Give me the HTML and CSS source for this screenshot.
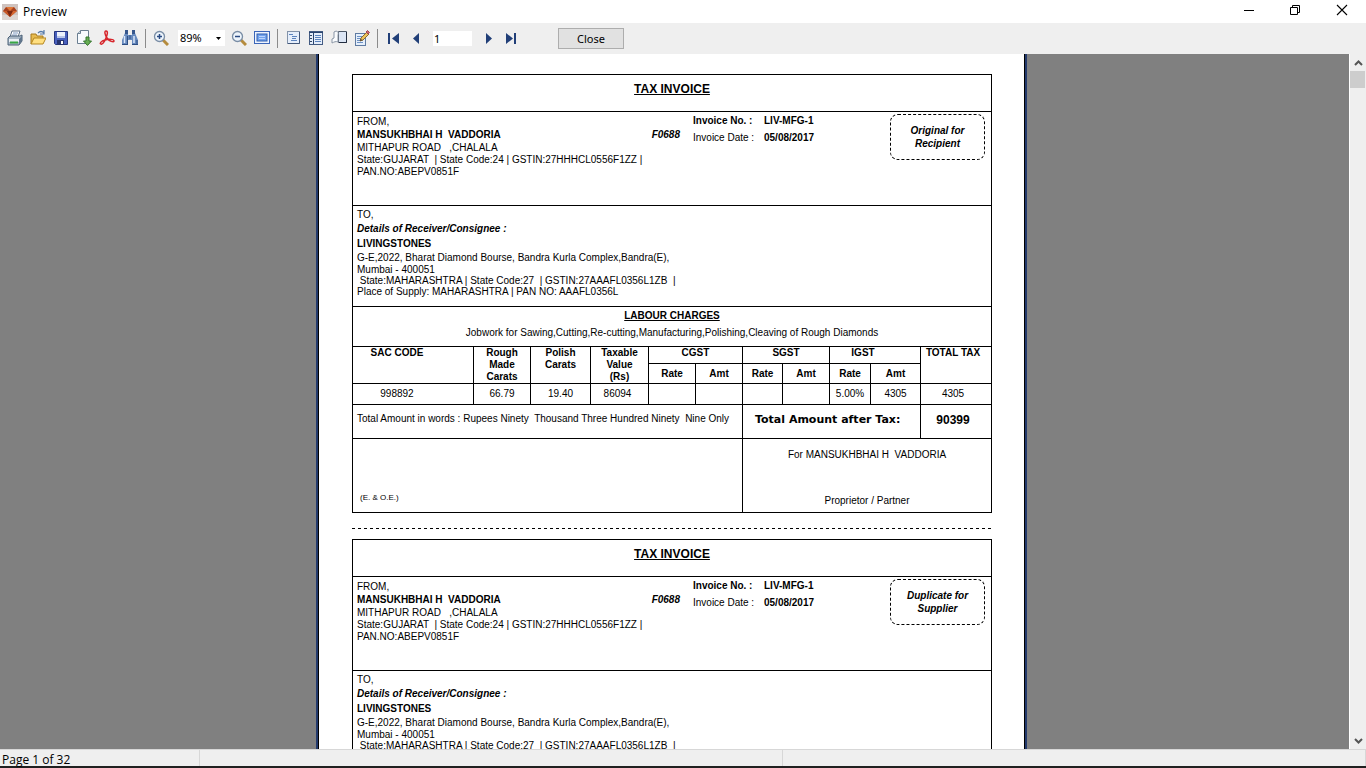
FILE: index.html
```html
<!DOCTYPE html>
<html lang="en">
<head>
<meta charset="utf-8">
<title>Preview</title>
<link rel="stylesheet" href="styles.css">
</head>
<body>
<div class="window">
  <header class="titlebar">
    <svg class="app-icon" viewBox="0 0 16 16" width="16" height="16"><rect width="16" height="16" fill="#cfc3bf"/><rect y="11" width="16" height="5" fill="#ddd5d1"/><path d="M4 3h8l3 4-7 6-7-6z" fill="#a8401c"/><path d="M4 3l4 4 4-4z" fill="#e07a3c"/><path d="M1 7h4l3 6z" fill="#c95a28"/><path d="M5 7h6l-3 6z" fill="#7c2710"/><path d="M11 7h4l-7 6z" fill="#d8672f"/></svg>
    <h1 class="title">Preview</h1>
    <div class="window-controls">
      <button aria-label="Minimize"><svg viewBox="0 0 12 12" width="12" height="12"><path d="M1 6.500h10" stroke="#000"/></svg></button>
      <button aria-label="Restore"><svg viewBox="0 0 12 12" width="12" height="12" fill="none" stroke="#000"><path d="M1.500 3.500h7v7h-7zM3.500 3.500v-2h7v7h-2"/></svg></button>
      <button aria-label="Close window"><svg viewBox="0 0 12 12" width="12" height="12"><path d="M1 1l10 10M11 1L1 11" stroke="#000" stroke-width="1.100"/></svg></button>
    </div>
  </header>

  <nav class="toolbar" aria-label="Preview tools">
    <div class="group">
      <button aria-label="Print"><svg viewBox="0 0 16 16" width="16" height="16"><path d="M5 1h8l-2 6H3z" fill="#fff" stroke="#5d7186"/><path d="M6 3h5M5 5h5" stroke="#7e9ac0"/><path d="M1 8l2-2h10l2-1v6l-3 4H1z" fill="#a9b8c6" stroke="#4b6076"/><path d="M2 9h10v3H2z" fill="#e9eff4"/><path d="M3 12.500h8" stroke="#37a644" stroke-width="2"/><path d="M12 9l3-3v5l-3 4z" fill="#60768d"/></svg></button>
      <button aria-label="Open"><svg viewBox="0 0 16 16" width="16" height="16"><path d="M1 14V4h5l1 2h6v3" fill="#e7bb50" stroke="#a87a1d"/><path d="M1 14L4 8h12l-3 6z" fill="#ffdf80" stroke="#b5861f"/><path d="M8 3c2-2 4-2 6 0M14 0v4h-4" fill="none" stroke="#5579a8" stroke-width="1.200"/></svg></button>
      <button aria-label="Save"><svg viewBox="0 0 16 16" width="16" height="16"><path d="M1.500 1.500h13v13h-12l-1-1z" fill="#4960bd" stroke="#26357f"/><path d="M4 2h8v6H4z" fill="#edf1fb"/><path d="M4 6h8v2H4z" fill="#b9c6e9"/><path d="M4 10h7v5H4z" fill="#28356f"/><path d="M8 11h2v3H8z" fill="#fff"/></svg></button>
      <button aria-label="Export"><svg viewBox="0 0 16 16" width="16" height="16"><path d="M4.500 .5h8v13h-11v-10z" fill="#f8fbfe" stroke="#6b7f91"/><path d="M4.500 .5v3h-3" fill="#cbd8e3" stroke="#6b7f91"/><path d="M10 7h3v4h2.500l-4 4.500-4-4.500H10z" fill="#67ad55" stroke="#35762c"/></svg></button>
      <button aria-label="Export to PDF"><svg viewBox="0 0 16 16" width="16" height="16" fill="none" stroke="#d7262c" stroke-width="1.500"><path d="M7 1c-2 0-1 4 1 7 2 3 7 5 7 3s-5-2-9-1c-4 1-6 4-4 4 2 1 5-5 6-9 1-3 0-4-1-4z"/></svg></button>
      <button aria-label="Find"><svg viewBox="0 0 16 16" width="16" height="16"><path d="M3 3h3v2h4V3h3l3 7v5h-6v-5H6v5H0v-5z" fill="#6689bd"/><path d="M3 0h3v4H3zM10 0h3v4h-3z" fill="#36568c"/><path d="M2.500 6v7M12 6v7" stroke="#dbe8fa" stroke-width="1.500"/><path d="M8 5v4M5.500 6v8M15 10v5M0 14.500h6M10 14.500h6" stroke="#2e4e83"/></svg></button>
    </div>
    <span class="separator"></span>
    <div class="group zoom-group">
      <button aria-label="Zoom in"><svg viewBox="0 0 16 16" width="16" height="16"><path d="M10 10l5 5" stroke="#b58b3d" stroke-width="3"/><circle cx="6.500" cy="6.500" r="5" fill="#edf4fb" stroke="#798da5" stroke-width="1.300"/><path d="M4 6.500h5M6.500 4v5" stroke="#294a83" stroke-width="1.500"/></svg></button>
      <span class="combo">
        <select aria-label="Zoom level"><option>89%</option><option>100%</option></select>
        <svg class="combo-arrow" viewBox="0 0 5 3" width="5" height="3"><path d="M0 0h5L2.500 3z" fill="#000"/></svg>
      </span>
      <button aria-label="Zoom out"><svg viewBox="0 0 16 16" width="16" height="16"><path d="M10 10l5 5" stroke="#b58b3d" stroke-width="3"/><circle cx="6.500" cy="6.500" r="5" fill="#edf4fb" stroke="#798da5" stroke-width="1.300"/><path d="M4 6.500h5" stroke="#294a83" stroke-width="1.500"/></svg></button>
      <button aria-label="Full screen"><svg viewBox="0 0 16 16" width="16" height="16"><rect x=".5" y="1.500" width="15" height="12" fill="#eef4ff" stroke="#3c66b8"/><rect x="3" y="4" width="10" height="7" fill="#73a3ed" stroke="#315eae"/><path d="M5 6.500h6M5 8.500h6" stroke="#bcd5fc"/></svg></button>
    </div>
    <span class="separator"></span>
    <div class="group">
      <button aria-label="Outline"><svg viewBox="0 0 16 16" width="16" height="16"><rect x="2.500" y="1.500" width="12" height="12" fill="#e5eefb" stroke="#8292a9"/><path d="M14.500 2v11.500H3" fill="none" stroke="#42577a"/><path d="M4 4.500h4M7 6.500h5M7 8.500h4M6 10.500h6" stroke="#5c84be"/></svg></button>
      <button aria-label="Thumbnails"><svg viewBox="0 0 16 16" width="16" height="16"><rect x="1.500" y="1.500" width="13" height="13" fill="#e5eefb" stroke="#435b82"/><path d="M1 2.500h14M5.500 2v12" stroke="#29446f"/><path d="M7 5.500h6M7 7.500h6M7 9.500h6M7 11.500h6" stroke="#5c84be"/><path d="M2 5.500h2M2 8.500h2M2 11.500h2" stroke="#304664"/></svg></button>
      <button aria-label="Page settings"><svg viewBox="0 0 16 16" width="16" height="16"><path d="M7.500 1.500h8v11h-8z" fill="#dbe5f4" stroke="#4d5969"/><path d="M15.500 2v10.500H8" fill="none" stroke="#222d40"/><path d="M3 2c3-2 5 0 4 3v7c-2-1-4 0-6 1V9l2-1z" fill="#f9fbfd" stroke="#8995a5"/></svg></button>
      <button aria-label="Edit page"><svg viewBox="0 0 16 16" width="16" height="16"><rect x="1.500" y="3.500" width="10" height="12" fill="#e5effb" stroke="#5f7ba2"/><path d="M3 6.500h6M3 8.500h5M3 10.500h6M3 12.500h6" stroke="#6d91c5"/><path d="M6 11l1-3 6-6 2 2-6 6z" fill="#edc45b" stroke="#8c692f"/><path d="M12 2l1.500-1.500 2 2L14 4z" fill="#d2686f" stroke="#a14850"/><path d="M6 11l1-2 1 1z" fill="#333"/></svg></button>
    </div>
    <span class="separator"></span>
    <div class="group pager">
      <button aria-label="First page"><svg viewBox="0 0 16 16" width="16" height="16" fill="#213f78"><path d="M3 3h2v11H3zM14 3v11L7 8.500z"/></svg></button>
      <button aria-label="Previous page"><svg viewBox="0 0 16 16" width="16" height="16" fill="#213f78"><path d="M11 3v11L5 8.500z"/></svg></button>
      <input class="page-input" aria-label="Page number" value="1">
      <button aria-label="Next page"><svg viewBox="0 0 16 16" width="16" height="16" fill="#213f78"><path d="M5 3v11l6-5.500z"/></svg></button>
      <button aria-label="Last page"><svg viewBox="0 0 16 16" width="16" height="16" fill="#213f78"><path d="M2 3v11l7-5.500zM10 3h2v11h-2z"/></svg></button>
    </div>
    <button class="close-button">Close</button>
  </nav>

  <div class="viewport">
    <main class="canvas">
      <div class="sheet">
        <article class="invoice">
          <h2 class="invoice-title">TAX INVOICE</h2>
          <section class="from">
            <div class="sender">
              <p>FROM,</p>
              <p class="name-line"><b>MANSUKHBHAI H  VADDORIA</b><b class="code">F0688</b></p>
              <p>MITHAPUR ROAD   ,CHALALA</p>
              <p class="tight">State:GUJARAT  | State Code:24 | GSTIN:27HHHCL0556F1ZZ |</p>
              <p class="tight">PAN.NO:ABEPV0851F</p>
            </div>
            <dl class="meta">
              <dt><b>Invoice No. :</b></dt><dd>LIV-MFG-1</dd>
              <dt>Invoice Date :</dt><dd>05/08/2017</dd>
            </dl>
            <p class="stamp">Original for<br>Recipient</p>
          </section>
          <section class="to">
            <p>TO,</p>
            <p class="details">Details of Receiver/Consignee :</p>
            <p class="receiver">LIVINGSTONES</p>
            <p class="tight">G-E,2022, Bharat Diamond Bourse, Bandra Kurla Complex,Bandra(E),</p>
            <p class="tight">Mumbai - 400051</p>
            <p class="tight"> State:MAHARASHTRA | State Code:27  | GSTIN:27AAAFL0356L1ZB  |</p>
            <p class="tight">Place of Supply: MAHARASHTRA | PAN NO: AAAFL0356L</p>
          </section>
          <section class="labour">
            <h3>LABOUR CHARGES</h3>
            <p>Jobwork for Sawing,Cutting,Re-cutting,Manufacturing,Polishing,Cleaving of Rough Diamonds</p>
          </section>
          <table class="charges">
            <colgroup><col class="c-sac"><col class="c-rough"><col class="c-polish"><col class="c-value"><col class="c-wide"><col class="c-wide"><col class="c-narrow"><col class="c-wide"><col class="c-rate"><col class="c-amt"><col class="c-total"></colgroup>
            <thead>
              <tr><th class="sac" rowspan="2">SAC CODE</th><th rowspan="2">Rough<br>Made<br>Carats</th><th rowspan="2">Polish<br>Carats</th><th rowspan="2">Taxable<br>Value<br>(Rs)</th><th colspan="2">CGST</th><th colspan="2">SGST</th><th class="igst" colspan="2">IGST</th><th class="tax" rowspan="2">TOTAL TAX</th></tr>
              <tr class="sub"><th>Rate</th><th>Amt</th><th>Rate</th><th>Amt</th><th>Rate</th><th>Amt</th></tr>
            </thead>
            <tbody>
              <tr><td class="sac">998892</td><td>66.79</td><td>19.40</td><td class="value">86094</td><td></td><td></td><td></td><td></td><td>5.00%</td><td>4305</td><td class="tax">4305</td></tr>
            </tbody>
          </table>
          <section class="totals">
            <p class="words">Total Amount in words : Rupees Ninety  Thousand Three Hundred Ninety  Nine Only</p>
            <p class="total-label">Total Amount after Tax:</p>
            <p class="grand-total">90399</p>
          </section>
          <section class="signature">
            <p class="eoe">(E. &amp; O.E.)</p>
            <div class="signatory"><p>For MANSUKHBHAI H  VADDORIA</p><p>Proprietor / Partner</p></div>
          </section>
        </article>

        <div class="cut-line"></div>

        <article class="invoice">
          <h2 class="invoice-title">TAX INVOICE</h2>
          <section class="from">
            <div class="sender">
              <p>FROM,</p>
              <p class="name-line"><b>MANSUKHBHAI H  VADDORIA</b><b class="code">F0688</b></p>
              <p>MITHAPUR ROAD   ,CHALALA</p>
              <p class="tight">State:GUJARAT  | State Code:24 | GSTIN:27HHHCL0556F1ZZ |</p>
              <p class="tight">PAN.NO:ABEPV0851F</p>
            </div>
            <dl class="meta">
              <dt><b>Invoice No. :</b></dt><dd>LIV-MFG-1</dd>
              <dt>Invoice Date :</dt><dd>05/08/2017</dd>
            </dl>
            <p class="stamp">Duplicate for<br>Supplier</p>
          </section>
          <section class="to">
            <p>TO,</p>
            <p class="details">Details of Receiver/Consignee :</p>
            <p class="receiver">LIVINGSTONES</p>
            <p class="tight">G-E,2022, Bharat Diamond Bourse, Bandra Kurla Complex,Bandra(E),</p>
            <p class="tight">Mumbai - 400051</p>
            <p class="tight"> State:MAHARASHTRA | State Code:27  | GSTIN:27AAAFL0356L1ZB  |</p>
          </section>
        </article>
      </div>
    </main>
    <div class="scrollbar">
      <button aria-label="Scroll up"><svg viewBox="0 0 9 6" width="9" height="6"><path d="M1 5l3.500-3.500L8 5" fill="none" stroke="#555" stroke-width="2"/></svg></button>
      <div class="thumb"></div>
      <button class="scroll-down" aria-label="Scroll down"><svg viewBox="0 0 9 6" width="9" height="6"><path d="M1 1l3.500 3.500L8 1" fill="none" stroke="#555" stroke-width="2"/></svg></button>
    </div>
  </div>

  <footer class="statusbar">
    <span class="page-status">Page 1 of 32</span>
    <span class="status-middle"></span>
    <span class="status-end"></span>
  </footer>
</div>
</body>
</html>
```
FILE: styles.css
```css
* { box-sizing: border-box; }

body {
  margin: 0;
  font-family: "Liberation Sans", Arial, sans-serif;
  color: #000;
}

h1, h2, h3, p, dl, dd { margin: 0; }

button {
  padding: 0;
  border: 0;
  background: none;
}

svg { display: block; }

.window {
  display: flex;
  flex-direction: column;
  height: 100vh;
  background: #efefef;
  border-bottom: 2px solid #202020;
}

/* Title bar */
.titlebar {
  display: flex;
  align-items: center;
  flex: none;
  height: 23px;
  padding-left: 2px;
  background: #fff;
}

.title {
  margin-left: 5px;
  font: 400 12px/20px "Open Sans", sans-serif;
}

.window-controls {
  display: flex;
  margin-left: auto;
}

.window-controls button {
  display: flex;
  justify-content: center;
  width: 46px;
  padding-bottom: 3px;
}

.window-controls button:last-child { width: 48px; }

/* Toolbar */
.toolbar {
  display: flex;
  align-items: center;
  flex: none;
  gap: 7px;
  height: 31px;
  padding: 0 7px 1px;
}

.group {
  display: flex;
  align-items: center;
  gap: 7px;
}

.separator {
  width: 1px;
  height: 19px;
  background: #8b8b8b;
}

.combo {
  position: relative;
  margin-left: 2px;
  margin-right: -1px;
}

.combo select {
  appearance: none;
  display: block;
  width: 47px;
  height: 16px;
  padding: 0 2px;
  border: 0;
  border-radius: 0;
  background: #fff;
  color: #000;
  font: 11px/16px "Noto Sans", sans-serif;
}

.combo-arrow {
  position: absolute;
  top: 7px;
  right: 4px;
}

.page-input {
  width: 39px;
  height: 15px;
  margin: 0 2px;
  padding: 0 1px;
  border: 0;
  background: #fff;
  color: #000;
  font: 11px/15px "Noto Sans", sans-serif;
}

.close-button {
  width: 66px;
  height: 21px;
  margin-left: 31px;
  border: 1px solid #adadad;
  background: #e1e1e1;
  color: #000;
  font: 11px/19px "Noto Sans", sans-serif;
}

/* Document area */
.viewport {
  display: flex;
  flex: 1;
  min-height: 0;
}

.canvas {
  display: flex;
  justify-content: center;
  flex: 1;
  padding-right: 6px;
  overflow: hidden;
  background: #808080;
}

.sheet {
  width: 100%;
  max-width: 711px;
  height: max-content;
  padding: 20px 33px 0 34px;
  background: #fff;
  border: solid #22396b;
  border-width: 0 2px;
  box-shadow: inset 1px 0 #000, inset -1px 0 #000;
}

.scrollbar {
  display: flex;
  flex-direction: column;
  flex: none;
  width: 17px;
  border-left: 1px solid #fff;
}

.scrollbar button {
  display: flex;
  align-items: center;
  justify-content: center;
  height: 17px;
}

.scrollbar .scroll-down { margin-top: auto; }

.thumb {
  height: 17px;
  margin-right: 1px;
  background: #cdcdcd;
}

/* Invoice */
.invoice {
  border: 1px solid #000;
  font-size: 10px;
  line-height: 13px;
}

.invoice p { white-space: pre; }

.invoice-title {
  height: 36px;
  padding-top: 6px;
  font-size: 12px;
  line-height: 16px;
  text-align: center;
  text-decoration: underline;
}

.from,
.to,
.labour,
.totals,
.signature { border-top: 1px solid #000; }

.from {
  display: flex;
  min-height: 94px;
  padding: 2px 6px 0 4px;
}

.sender {
  flex: 1;
  padding-top: 1px;
}

.name-line {
  display: flex;
  justify-content: space-between;
  padding-right: 13px;
}

.code { font-style: italic; }

.tight { line-height: 12px; }

.tight + .tight { line-height: 11px; }

.meta {
  display: grid;
  grid-template-columns: 71px 126px;
  grid-auto-rows: 17px;
}

.meta dd { font-weight: 700; }

.stamp {
  align-self: flex-start;
  width: 95px;
  padding: 9px 0;
  border: 1px dashed #000;
  border-radius: 8px;
  font-style: italic;
  font-weight: 700;
  text-align: center;
}

.to {
  min-height: 101px;
  padding: 2px 4px 0;
}

.details {
  padding: 1px 0;
  font-style: italic;
  font-weight: 700;
}

.receiver {
  padding: 1px 0 2px;
  font-weight: 700;
}

.labour {
  min-height: 40px;
  padding-top: 2px;
  text-align: center;
}

.labour h3 {
  margin: 0 0 4px;
  font-size: 10px;
  line-height: 13px;
  text-decoration: underline;
}

.charges {
  width: 100%;
  table-layout: fixed;
  border-collapse: separate;
  border-spacing: 0;
  line-height: 12px;
  text-align: center;
}

.c-sac { width: 120px; }
.c-rough { width: 57px; }
.c-polish { width: 60px; }
.c-value { width: 58px; }
.c-wide { width: 47px; }
.c-narrow { width: 40px; }
.c-rate { width: 41px; }
.c-amt { width: 50px; }
.c-total { width: 71px; }

.charges th,
.charges td {
  padding: 0;
  border: solid #000;
  border-width: 1px 0 0 1px;
}

.charges th { height: 17px; vertical-align: top; }
.charges .sub th { height: 20px; vertical-align: middle; }
.charges td { height: 21px; }

.charges .sac {
  padding-right: 32px;
  border-left: 0;
}

.charges .igst { padding-right: 24px; }
.charges .tax { padding-right: 6px; }
.charges .value { padding-right: 4px; }

.totals {
  display: grid;
  grid-template-columns: 1fr 178px 71px;
  min-height: 34px;
}

.words { padding: 7px 4px; }

.total-label,
.grand-total {
  border-left: 1px solid #000;
  font: 700 11px/30px "DejaVu Sans", sans-serif;
}

.total-label { padding-left: 12px; }

.grand-total {
  padding-right: 6px;
  font-family: "Liberation Sans", Arial, sans-serif;
  font-size: 12px;
  text-align: center;
}

.signature {
  display: grid;
  grid-template-columns: 1fr 249px;
  min-height: 74px;
}

.eoe {
  align-self: end;
  padding: 0 7px 8px;
  font-size: 8px;
}

.signatory {
  display: flex;
  flex-direction: column;
  justify-content: space-between;
  padding: 9px 0 5px;
  border-left: 1px solid #000;
  text-align: center;
}

.cut-line {
  height: 1px;
  margin: 15px 0 10px;
  background: repeating-linear-gradient(to right, #000 0 3px, #fff 3px 6px);
}

/* Status bar */
.statusbar {
  display: flex;
  flex: none;
  height: 17px;
  border-top: 1px solid #d7d7d7;
  font: 12px/20px "Open Sans", sans-serif;
}

.page-status {
  flex: 0 0 200px;
  padding-left: 2px;
  border-right: 1px solid #d7d7d7;
}

.status-middle {
  flex: 0 0 583px;
  border-right: 1px solid #d7d7d7;
}

.status-end {
  flex: 1;
  border-right: 1px solid #d7d7d7;
}
```
